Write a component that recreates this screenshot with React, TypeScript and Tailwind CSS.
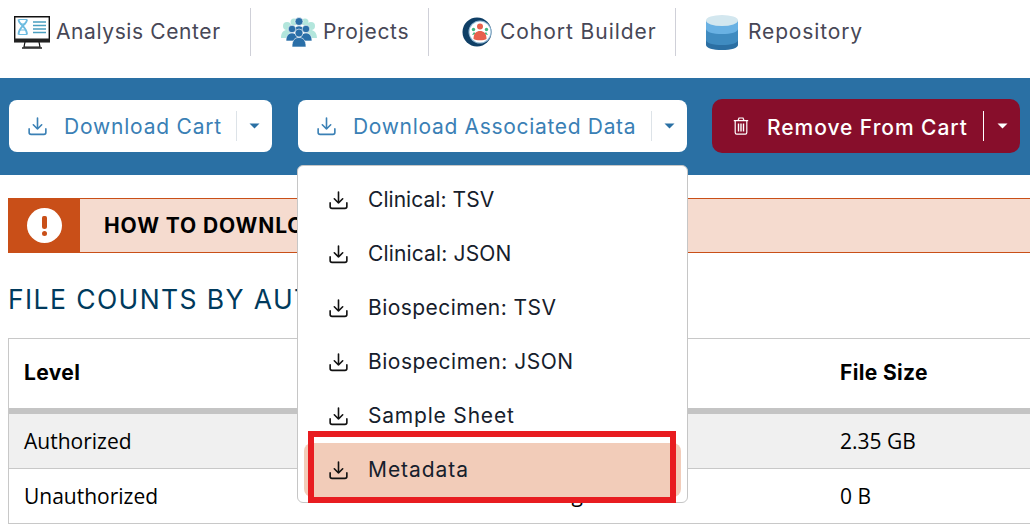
const DownloadIcon = ({ className }: { className: string }) => (
  <svg viewBox="0 0 20 20" fill="none" stroke="currentColor" strokeWidth="1.7" className={className}>
    <path d="M10 1v11.5M5.6 8.2 10 12.6l4.4-4.4" strokeLinecap="round" strokeLinejoin="round" />
    <path d="M1.2 12.5v3.8c0 1.2.8 2 2 2h13.6c1.2 0 2-.8 2-2v-3.8" strokeLinecap="round" />
  </svg>
);

const Caret = ({ className }: { className: string }) => (
  <svg viewBox="0 0 10 6" className={className}>
    <path d="M0 .5h10L5 5.5z" fill="currentColor" />
  </svg>
);

const TrashIcon = () => (
  <svg viewBox="0 0 16 18" fill="none" stroke="currentColor" strokeWidth="1.2" className="h-[18px] w-[16px]">
    <path d="M.8 3.6h14.4M5 3.4 6 1h4l1 2.4M2.2 3.8v11.6c0 1 .6 1.7 1.5 1.7h8.6c.9 0 1.5-.7 1.5-1.7V3.8" />
    <path d="M5.5 6.5v8M8 6.5v8M10.5 6.5v8" strokeWidth="1.4" />
  </svg>
);

const MonitorIcon = () => (
  <svg viewBox="0 0 36 33" className="h-[33px] w-[36px] shrink-0">
    <path d="M.7.7h34.6v25H.7z" fill="#fff" stroke="#111" strokeWidth="1.4" />
    <path d="M0 22.5h36v3.5H0z" fill="#222" />
    <path d="M11 26h14l1 5H10z" fill="#fff" stroke="#111" strokeWidth="1.2" />
    <path d="M8 32h20" stroke="#111" strokeWidth="1.4" />
    <path d="M4.500 3.500c0 5 8.500 7 8.500 15M13 3.500c0 5-8.500 7-8.500 15" fill="none" stroke="#6dbbe0" strokeWidth="1.900" />
    <path d="M4.500 3.500H13M6 8h5.500M6 14h5.500M4.500 18.500H13" stroke="#6dbbe0" strokeWidth="1.200" />
    <path d="M19 6h13M19 9.500h13M19 13h13M19 16.500h13" stroke="#4a9fc0" strokeWidth="1.500" />
  </svg>
);

const PeopleIcon = () => (
  <svg viewBox="0 0 36 30" className="h-[30px] w-[36px] shrink-0">
    <g fill="#b3e6dc">
      <circle cx="6" cy="9" r="4" />
      <circle cx="13" cy="5" r="3.500" />
      <circle cx="24" cy="5" r="3.500" />
      <circle cx="30" cy="9" r="4" />
      <path d="M0 21c0-6 3-8 6-8s5 3 5 8zM25 21c0-6 3-8 5-8s6 2 6 8z" />
    </g>
    <g fill="#2a6fa8" stroke="#fff" strokeWidth=".6">
      <circle cx="18" cy="4.500" r="4" />
      <path d="M13 15c0-4 2-6 5-6s5 2 5 6z" />
      <circle cx="11" cy="12" r="3.800" />
      <circle cx="25" cy="12" r="3.800" />
      <path d="M5 24c0-6 3-8 6-8s6 2 6 8zM19 24c0-6 3-8 6-8s6 2 6 8z" />
      <circle cx="18" cy="16" r="4" />
      <path d="M11 30c0-7 3-9.500 7-9.500s7 2.500 7 9.500z" />
    </g>
  </svg>
);

const CohortIcon = () => (
  <svg viewBox="0 0 30 30" className="h-[30px] w-[30px] shrink-0">
    <circle cx="15" cy="15" r="14.500" fill="#0f3f66" />
    <circle cx="18" cy="15" r="11.500" fill="#8fb6d3" />
    <circle cx="18" cy="15" r="10.500" fill="#fff" />
    <circle cx="18" cy="9.500" r="3" fill="#e8604c" />
    <circle cx="11.500" cy="12.500" r="1.700" fill="#3fb67f" />
    <circle cx="24.500" cy="12.500" r="1.700" fill="#3fb67f" />
    <path d="M10 18l2-3 2 2zM26 18l-2-3-2 2z" fill="#3fb67f" />
    <path d="M11.500 22c0-6 3-8 6.500-8s6.500 2 6.500 8c-2 1.800-11 1.800-13 0z" fill="#e8604c" />
  </svg>
);

const DbIcon = () => (
  <svg viewBox="0 0 32 35" className="h-[35px] w-[32px] shrink-0">
    <path d="M0 24v6c0 3 7 5 16 5s16-2 16-5v-6z" fill="#2b6fa3" />
    <path d="M0 14v11c0 3 7 5 16 5s16-2 16-5V14z" fill="#3f8bc0" />
    <path d="M0 5v9c0 3 7 5 16 5s16-2 16-5V5z" fill="#69b1e3" />
    <ellipse cx="16" cy="5.500" rx="16" ry="5.500" fill="#d3e7ef" />
  </svg>
);

const menu = [
  { label: "Clinical: TSV", track: "tracking-[0.05px]" },
  { label: "Clinical: JSON", track: "tracking-[0.15px]" },
  { label: "Biospecimen: TSV", track: "tracking-[0.45px]" },
  { label: "Biospecimen: JSON", track: "tracking-[0.5px]" },
  { label: "Sample Sheet", track: "tracking-[0.8px]" },
  { label: "Metadata", track: "tracking-[0.95px]" },
];
const mont = "font-['Inter','Noto_Sans',sans-serif]";
const rowGrid = "grid grid-cols-[485px_331px_1fr] items-center border-b border-[#c8c8c8] pl-[15px]";

export default function App() {
  return (
    <div className={`relative h-[529px] w-[1030px] overflow-hidden bg-white ${mont}`}>
      <nav className="flex h-[78px] items-start pt-[8px] text-[21px] text-[#474756]">
        <div className="flex h-[48px] w-[251px] items-center gap-[6px] border-r border-[#cfd0d8] pl-[14px]">
          <MonitorIcon />
          <span className="tracking-[0.6px]">Analysis Center</span>
        </div>
        <div className="flex h-[48px] w-[178px] items-center gap-[6px] border-r border-[#cfd0d8] pl-[30px]">
          <PeopleIcon />
          <span className="tracking-[0.7px]">Projects</span>
        </div>
        <div className="flex h-[48px] w-[247px] items-center gap-[8px] border-r border-[#cfd0d8] pl-[33px]">
          <CohortIcon />
          <span className="tracking-[0.95px]">Cohort Builder</span>
        </div>
        <div className="flex h-[48px] items-center gap-[10px] pl-[30px]">
          <DbIcon />
          <span className="tracking-[0.85px]">Repository</span>
        </div>
      </nav>

      <div className="flex h-[97px] items-center bg-[#2a70a4] pb-px pl-[9px]">
        <div className="flex h-[52px] w-[263px] items-center rounded-[8px] bg-white pl-[19px] text-[21px] text-[#3a80b5]">
          <DownloadIcon className="h-[19px] w-[19px] shrink-0" />
          <span className="ml-[17px] w-[172px] whitespace-nowrap pt-px tracking-[0.8px]">Download Cart</span>
          <span className="h-[30px] w-px bg-[#dde3e8]" />
          <Caret className="ml-[12px] h-[6px] w-[11px] text-[#2a70a4]" />
        </div>
        <div className="ml-[26px] flex h-[52px] w-[389px] items-center rounded-[8px] bg-white pl-[19px] text-[21px] text-[#3a80b5]">
          <DownloadIcon className="h-[19px] w-[19px] shrink-0" />
          <span className="ml-[17px] w-[298px] whitespace-nowrap pt-px tracking-[0.68px]">Download Associated Data</span>
          <span className="h-[30px] w-px bg-[#dde3e8]" />
          <Caret className="ml-[12px] h-[6px] w-[11px] text-[#2a70a4]" />
        </div>
        <div className="ml-[25px] flex h-[54px] w-[308px] items-center rounded-[10px] bg-[#870e2b] pl-[21px] text-[21px] font-medium text-white">
          <TrashIcon />
          <span className="ml-[18px] w-[216px] whitespace-nowrap pt-[3px] tracking-[0.95px]">Remove From Cart</span>
          <span className="h-[30px] w-px bg-white" />
          <Caret className="ml-[13px] h-[6px] w-[11px] text-white" />
        </div>
      </div>

      <main className="pl-[8px] pt-[23px]">
        <div className="flex h-[55px] items-center border-y border-[#c94f18] bg-[#f5dbcf]">
          <div className="-my-px flex h-[55px] w-[72px] items-center justify-center bg-[#c94f18]">
            <div className="flex h-[35px] w-[35px] flex-col items-center justify-center gap-[2px] rounded-full bg-white">
              <span className="h-[13px] w-[5px] rounded-t-[2px] rounded-b-[3px] bg-[#c94f18]" />
              <span className="h-[5px] w-[5px] rounded-full bg-[#c94f18]" />
            </div>
          </div>
          <span className="ml-[24px] whitespace-nowrap text-[21px] font-bold tracking-[0.9px] text-black">HOW TO DOWNLOAD</span>
        </div>

        <h2 className="mt-[30px] h-[33px] whitespace-nowrap text-[26.500px] leading-[33px] tracking-[1.4px] text-[#003a5c]">FILE COUNTS BY AUTHORIZATION</h2>

        <div className="mt-[22px] w-[1100px] border-x border-t border-[#c8c8c8] text-[21px] text-black">
          <div className={`${rowGrid} h-[75px] !border-b-[6px] !border-b-[#c4c4c4] pb-[2px] font-bold tracking-[0.35px]`}>
            <span>Level</span>
            <span>Status</span>
            <span>File Size</span>
          </div>
          <div className={`${rowGrid} h-[55px] bg-[#f0f0f0] pt-[2px] font-['Open_Sans',sans-serif]`}>
            <span>Authorized</span>
            <span>Available</span>
            <span>2.35 GB</span>
          </div>
          <div className={`${rowGrid} h-[55px] pt-[2px] font-['Open_Sans',sans-serif]`}>
            <span>Unauthorized</span>
            <span className="mb-[5px]">Missing</span>
            <span>0 B</span>
          </div>
        </div>
      </main>

      <div className="absolute left-[297px] top-[165px] flex h-[338px] w-[391px] flex-col rounded-[6px] border border-[#c6c6c6] bg-white pt-[7px] text-[21px] text-[#16202c]">
        {menu.map((item) => (
          <div
            key={item.label}
            className={`mx-[6px] flex h-[54px] shrink-0 items-center rounded-[8px] pl-[25px] ${item.label === "Metadata" ? "bg-[#f2ccb9]" : ""}`}
          >
            <DownloadIcon className="h-[19px] w-[19px] shrink-0 text-[#111]" />
            <span className={`ml-[20px] ${item.track}`}>{item.label}</span>
          </div>
        ))}
      </div>

      <div className="absolute left-[308px] top-[431px] h-[72px] w-[368px] border-[6px] border-[#e81c20]" />
    </div>
  );
}
